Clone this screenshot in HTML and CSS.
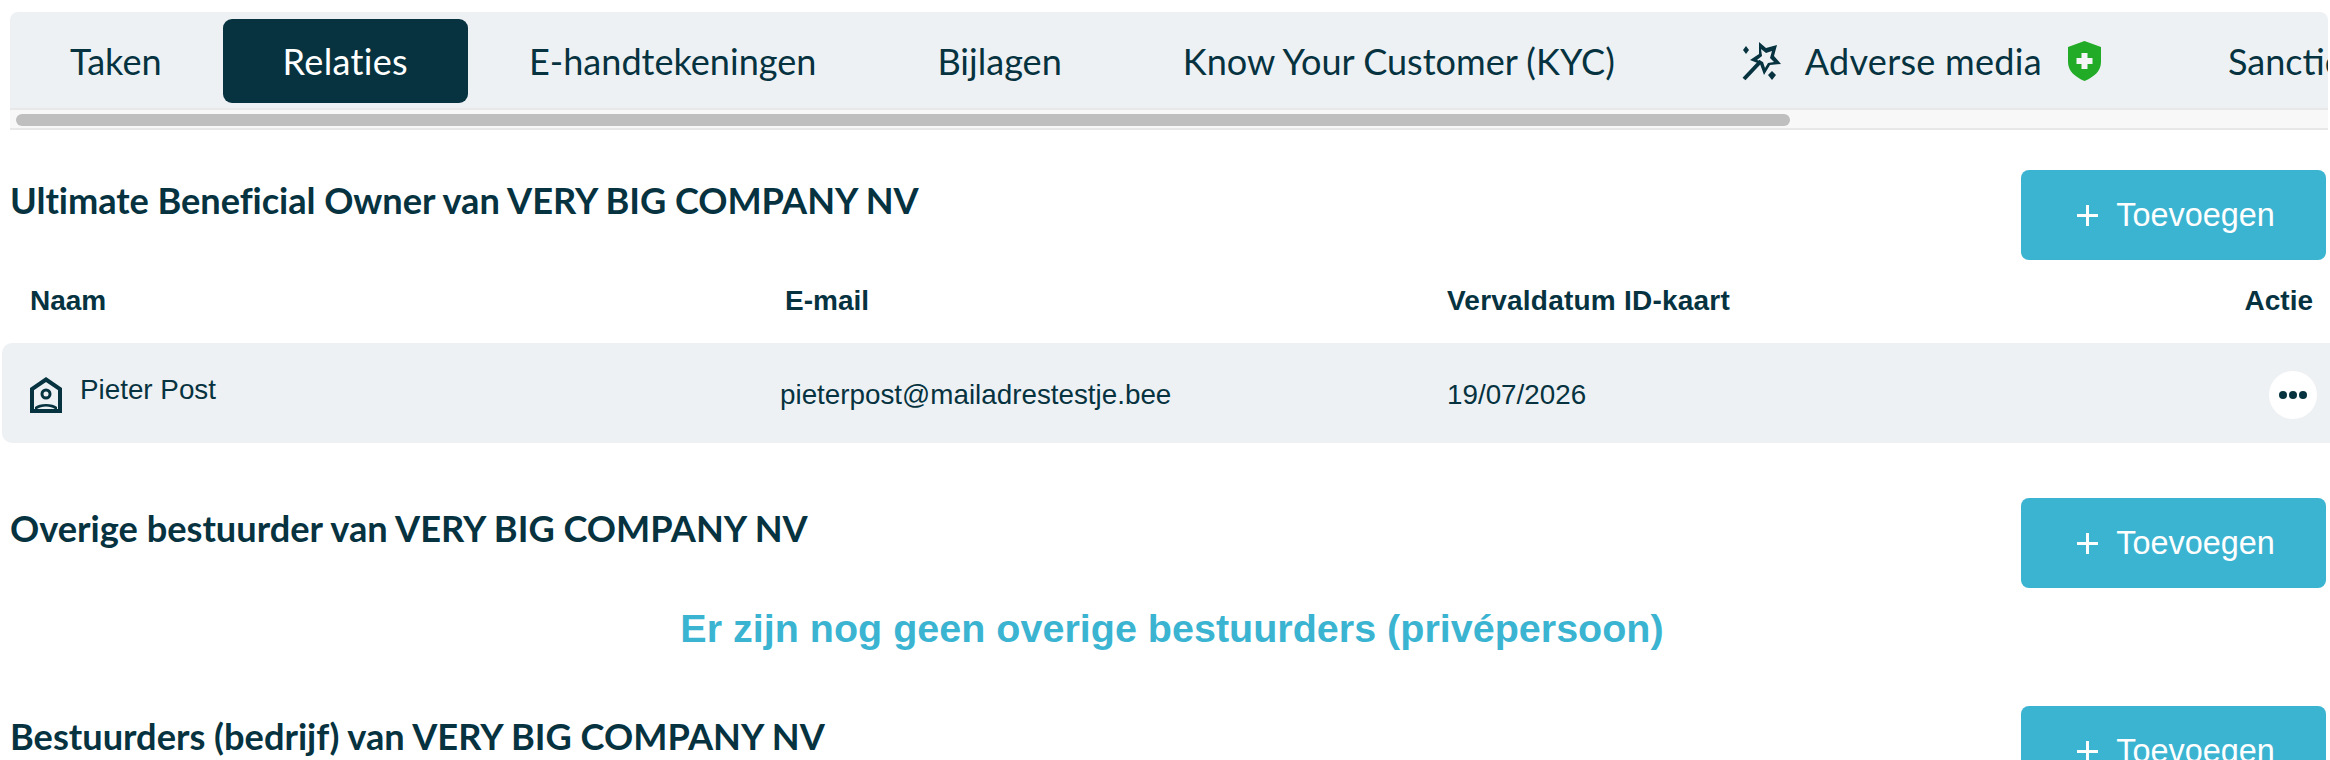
FILE: index.html
```html
<!DOCTYPE html>
<html lang="nl">
<head>
  <meta charset="UTF-8">
  <meta name="viewport" content="width=device-width, initial-scale=1.0">
  <title>Relaties</title>
  <link rel="stylesheet" href="styles.css">
</head>
<body>

<div class="tabs-wrap">
  <div class="tabs">
    <div class="tab">Taken</div>
    <div class="tab active">Relaties</div>
    <div class="tab">E-handtekeningen</div>
    <div class="tab">Bijlagen</div>
    <div class="tab">Know Your Customer (KYC)</div>
    <div class="tab tab-media">
      <svg class="wand" viewBox="0 0 40 40" width="40" height="40">
        <path d="M17 1l7 6 11-3-3 11 7 8-11 1-6 10-4-11-10-4 9-6z" fill="#06333f"/>
        <path d="M19 8l5 4 6-2-2 7 4 4-6 1-3 5-2-6-6-2 5-4z" fill="#eef1f4"/>
        <path d="M2 38L19 20" stroke="#06333f" stroke-width="4" fill="none"/>
        <path d="M4 5l3 4-3 4-3-4zM30 30l4 4-4 5-4-5z" fill="#06333f"/>
      </svg>
      <span class="media-label">Adverse media</span>
      <svg class="shield" viewBox="0 0 33 40" width="33" height="40">
        <path d="M16.500 0L33 6v15c0 9-7 15-16.500 19C7 36 0 30 0 21V6z" fill="#22ab26"/>
        <path d="M13.500 12h6v5h5v6h-5v5h-6v-5h-5v-6h5z" fill="#f3f5f6"/>
      </svg>
    </div>
    <div class="tab">Sancties</div>
  </div>
  <div class="scroll-track"><div class="scroll-thumb"></div></div>
</div>

<div class="section section-first">
  <div class="section-head">
    <h2 class="title-long">Ultimate Beneficial Owner van VERY BIG COMPANY NV</h2>
    <button class="add-btn"><span class="plus"></span>Toevoegen</button>
  </div>
  <div class="tbl-head">
    <div>Naam</div>
    <div class="col-mail">E-mail</div>
    <div class="col-date">Vervaldatum ID-kaart</div>
    <div>Actie</div>
  </div>
  <div class="tbl-row">
    <div class="name-cell">
      <svg viewBox="0 0 32 36" width="32" height="36">
        <path d="M2 34V12L16 2.500 30 12v22z" fill="none" stroke="#06333f" stroke-width="4"/>
        <circle cx="16" cy="17" r="4" fill="none" stroke="#06333f" stroke-width="3"/>
        <path d="M5 30c4-4 18-4 22 0v6H5z" fill="#06333f"/>
        <path d="M7 32c4-3.500 14-3.500 18 0z" fill="#eef1f4"/>
      </svg>
      <span>Pieter Post</span>
    </div>
    <div>pieterpost@mailadrestestje.bee</div>
    <div>19/07/2026</div>
    <div class="dots"><i></i><i></i><i></i></div>
  </div>
</div>

<div class="section">
  <div class="section-head">
    <h2>Overige bestuurder van VERY BIG COMPANY NV</h2>
    <button class="add-btn"><span class="plus"></span>Toevoegen</button>
  </div>
  <p class="empty">Er zijn nog geen overige bestuurders (privépersoon)</p>
</div>

<div class="section">
  <div class="section-head">
    <h2>Bestuurders (bedrijf) van VERY BIG COMPANY NV</h2>
    <button class="add-btn"><span class="plus"></span>Toevoegen</button>
  </div>
</div>

</body>
</html>
```

FILE: styles.css
```css
html, body {
  height: 760px;
  overflow: hidden;
}

body {
  font-family: 'Liberation Sans', Arial, sans-serif;
  background-color: #fff;
  color: #06333f;
  margin: 0;
}

.tabs-wrap {
  margin: 12px 2px 0 10px;
  border-radius: 8px 8px 0 0;
  overflow: hidden;
}

.tabs {
  display: flex;
  gap: 1px;
  height: 96px;
  padding: 7px 0 5px;
  box-sizing: border-box;
  background: #eef1f4;
  overflow: hidden;
  font-family: Lato, sans-serif;
  font-size: 36.1px;
}

.tab {
  flex: none;
  display: flex;
  align-items: center;
  padding: 0 60px;
  border-radius: 9px;
}

.tab.active {
  background: #06333f;
  color: #fff;
  letter-spacing: 0.3px;
}

.tab-media {
  padding: 0 66px;
}

.wand {
  margin-right: 23px;
}

.media-label {
  letter-spacing: 0.25px;
}

.shield {
  margin-left: 26px;
}

.scroll-track {
  height: 22px;
  padding: 4px 6px 2px;
  box-sizing: border-box;
  background: #f8f8f8;
  border-top: 2px solid #e8e8e8;
  border-bottom: 2px solid #e8e8e8;
}

.scroll-thumb {
  width: 1774px;
  height: 12px;
  background: #bfbfbf;
  border-radius: 6px;
}

.section-first {
  margin-top: 40px;
}

.section-head {
  display: flex;
  justify-content: space-between;
  align-items: flex-start;
  padding: 0 4px 0 10px;
}

h2 {
  margin: 8px 0 0;
  font-family: Lato, sans-serif;
  font-size: 36.2px;
  font-weight: 700;
}

.title-long {
  letter-spacing: -0.06px;
}

.add-btn {
  width: 305px;
  height: 90px;
  display: flex;
  align-items: center;
  justify-content: center;
  gap: 18px;
  padding: 0 0 0 5px;
  border: none;
  border-radius: 8px;
  background-color: #3bb4d2;
  color: #fff;
  font-family: 'Liberation Sans', Arial, sans-serif;
  font-size: 32.4px;
}

.plus {
  width: 21px;
  height: 21px;
  background: linear-gradient(#fff, #fff) center / 21px 3px no-repeat,
    linear-gradient(#fff, #fff) center / 3px 21px no-repeat;
}

.tbl-head, .tbl-row {
  display: grid;
  grid-template-columns: 750px 667px 1fr auto;
  align-items: center;
  margin-left: 2px;
  padding-left: 28px;
}

.tbl-head {
  height: 83px;
  padding-right: 17px;
  padding-bottom: 1px;
  box-sizing: border-box;
  font-size: 28px;
  font-weight: 700;
}

.col-mail {
  padding-left: 5px;
}

.col-date {
  letter-spacing: 0.22px;
}

.tbl-row {
  height: 100px;
  padding-right: 13px;
  padding-top: 3px;
  box-sizing: border-box;
  margin-bottom: 55px;
  background: #eef1f4;
  border-radius: 10px 0 0 10px;
  font-size: 27.8px;
}

.name-cell {
  display: flex;
  align-items: center;
  gap: 18px;
}

.name-cell span {
  padding-bottom: 10px;
}

.dots {
  width: 48px;
  height: 48px;
  display: flex;
  align-items: center;
  justify-content: center;
  gap: 2px;
  background: #fff;
  border-radius: 50%;
}

.dots i {
  width: 8px;
  height: 8px;
  background: #06333f;
  border-radius: 50%;
}

.empty {
  margin: 18px 0 56px;
  padding-left: 14px;
  text-align: center;
  color: #3bb4d2;
  font-size: 39.5px;
  font-weight: 700;
  line-height: 44px;
}
```
